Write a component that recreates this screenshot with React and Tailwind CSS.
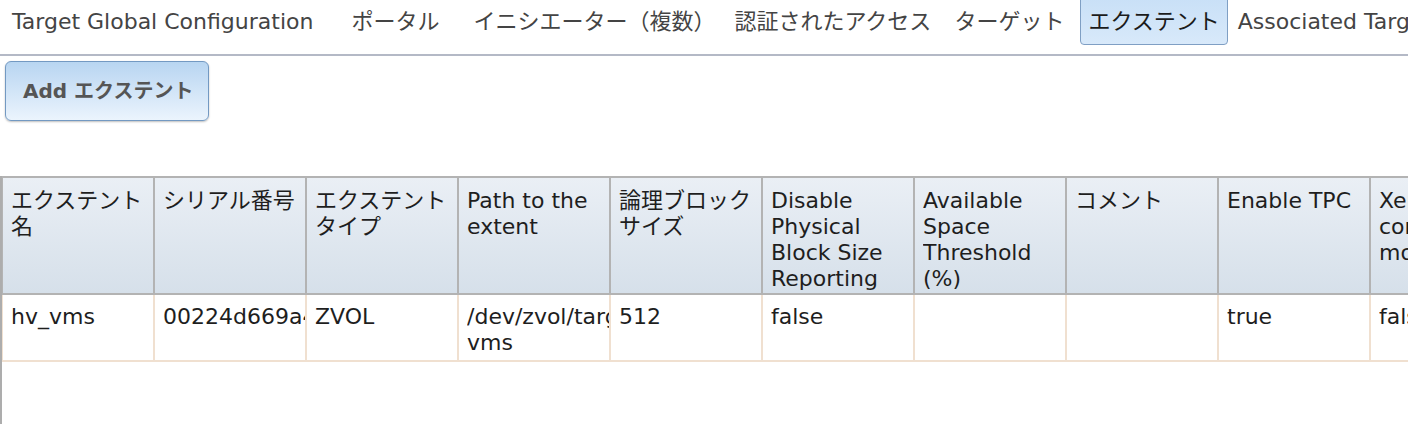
import React from "react";

const tabs = [
  { t: "Target Global Configuration", ml: "ml-0" },
  { t: "ポータル", ml: "ml-[22px]" },
  { t: "イニシエーター（複数）", ml: "ml-[18px]" },
  { t: "認証されたアクセス", ml: "ml-[3px]" },
  { t: "ターゲット", ml: "ml-[7px]" },
  { t: "エクステント", ml: "ml-[8px]", active: true },
  { t: "Associated Targets", ml: "ml-[2px]" },
];

const headers = [
  ["エクステント", "名"],
  ["シリアル番号"],
  ["エクステント", "タイプ"],
  ["Path to the", "extent"],
  ["論理ブロック", "サイズ"],
  ["Disable", "Physical", "Block Size", "Reporting"],
  ["Available", "Space", "Threshold", "(%)"],
  ["コメント"],
  ["Enable TPC"],
  ["Xen", "compat", "mode"],
];

const row = [
  ["hv_vms"],
  ["00224d669a4e800"],
  ["ZVOL"],
  ["/dev/zvol/target/hv_", "vms"],
  ["512"],
  ["false"],
  [""],
  [""],
  ["true"],
  ["false"],
];

export default function App() {
  return (
    <div
      className="h-[424px] w-[1408px] overflow-hidden bg-white flex flex-col text-[#1e1e1e]"
      style={{ fontFamily: '"DejaVu Sans", "Noto Sans CJK JP", sans-serif' }}
    >
      <div className="h-[56px] shrink-0 border-b-2 border-[#b4b9c6] flex items-start pl-[4px] whitespace-nowrap">
        {tabs.map(({ t, ml, active }) => (
          <div
            key={t}
            className={
              "-mt-[2px] h-[47px] px-[7px] flex items-center text-[22px] border rounded-b-[4px] shrink-0 " +
              ml +
              " " +
              (active
                ? "border-[#7f9fc4] bg-gradient-to-b from-[#c9e0f7] to-[#d8e9fa] text-[#1b1b1b]"
                : "border-transparent text-[#444]")
            }
          >
            {t}
          </div>
        ))}
      </div>

      <div className="pl-[5px] pt-[5px] shrink-0">
        <button className="w-[204px] h-[60px] rounded-[6px] border border-[#7399c2] bg-gradient-to-b from-[#b8d5f1] to-[#ebf4fd] text-[#555] font-bold text-[20px] text-left pl-[17px] shadow-[0_1px_2px_rgba(0,0,0,0.25)]">
          Add エクステント
        </button>
      </div>

      <div className="mt-[55px] flex-1 border-l-2 border-[#adadad] overflow-hidden">
        <table className="w-[1521px] border-separate border-spacing-0 table-fixed text-[22px] leading-[26px]">
          <colgroup>
            {headers.map((_, i) => (
              <col key={i} className={i === 0 ? "w-[153px]" : "w-[152px]"} />
            ))}
          </colgroup>
          <thead>
            <tr>
              {headers.map((h, i) => (
                <th
                  key={i}
                  className={
                    "align-top text-left font-normal overflow-hidden whitespace-nowrap border-t-2 border-b-2 border-r-2 border-[#b3b3b3] bg-gradient-to-b from-[#eaeff5] to-[#d6e0ea] pl-[8px] pt-[10px] pb-[1px] h-[119px] " +
                    (i === 0 ? "border-l" : "")
                  }
                >
                  {h.map((l, j) => (
                    <div key={j} className="overflow-hidden">
                      {l}
                    </div>
                  ))}
                </th>
              ))}
            </tr>
          </thead>
          <tbody>
            <tr>
              {row.map((c, i) => (
                <td
                  key={i}
                  className={
                    "align-top text-left overflow-hidden whitespace-nowrap border-b-2 border-r-2 border-[#f0e0d0] pl-[8px] pt-[9px] pb-[4px] h-[66px] " +
                    (i === 0 ? "border-l" : "")
                  }
                >
                  {c.map((l, j) => (
                    <div key={j} className="overflow-hidden">
                      {l || "\u00a0"}
                    </div>
                  ))}
                </td>
              ))}
            </tr>
          </tbody>
        </table>
      </div>
    </div>
  );
}
